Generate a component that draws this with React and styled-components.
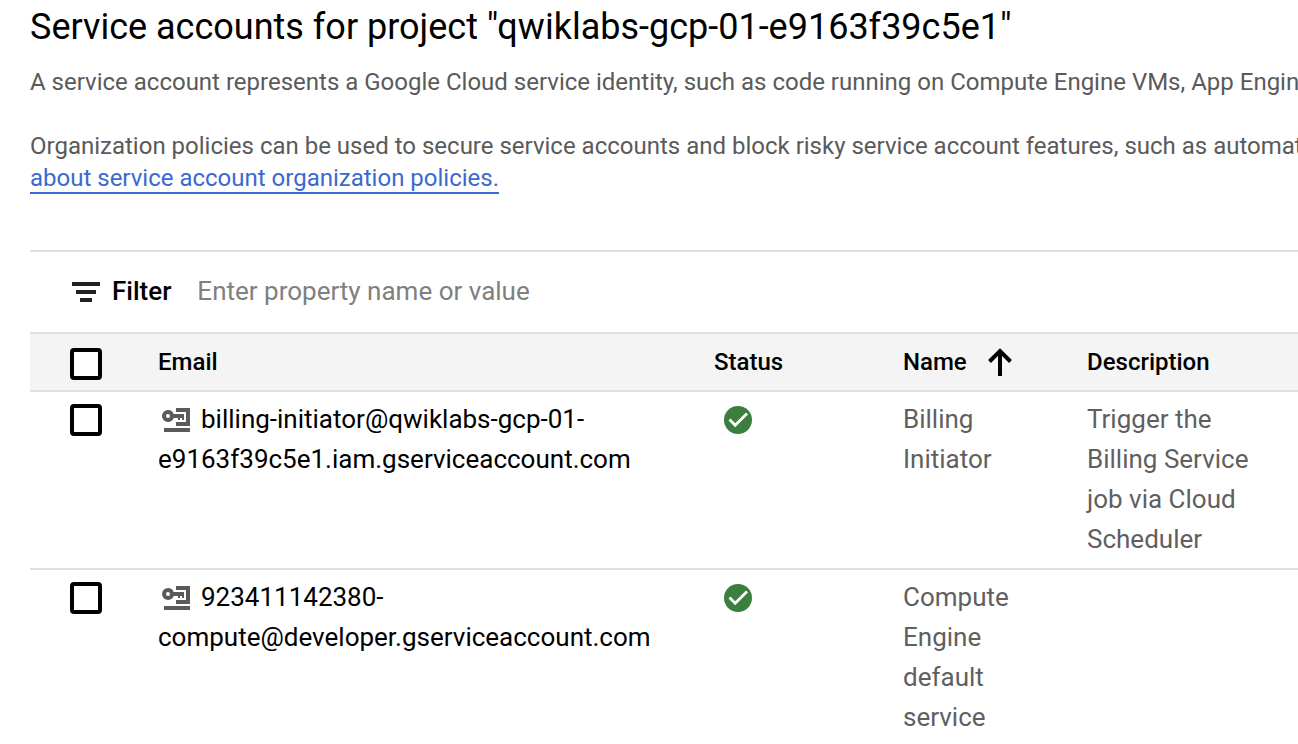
import React from 'react'
import styled, { createGlobalStyle } from 'styled-components'

const GlobalStyle = createGlobalStyle`
  * {
    box-sizing: border-box;
  }
  body {
    margin: 0;
    background: #ffffff;
    font-family: Roboto, "Liberation Sans", sans-serif;
  }
`
const Page = styled.main`
  height: 100vh;
  overflow: hidden;
  padding: 3px 0 0 30px;
`
const Title = styled.h1`
  margin: 0;
  font-size: 36px;
  line-height: 48px;
  font-weight: 400;
  color: #000000;
  white-space: nowrap;
`
const Intro = styled.div`
  padding: 15px 0 56px;
  display: flex;
  flex-direction: column;
  gap: 32px;
`
const Paragraph = styled.p`
  margin: 0;
  font-size: 24px;
  line-height: 32px;
  color: #5a5a5a;
  white-space: nowrap;
`
const PolicyLink = styled.a`
  color: #3b69d0;
  text-decoration: none;
  border-bottom: 2px solid #3b69d0;
`
const FilterBar = styled.div`
  display: flex;
  align-items: center;
  height: 82px;
  padding-left: 42px;
  border-top: 2px solid #e0e0e0;
`
const FilterLabel = styled.label`
  display: flex;
  align-items: center;
  gap: 12px;
  font-size: 26px;
  line-height: 40px;
  font-weight: 500;
  color: #000000;
`
const FilterText = styled.span`
  padding-bottom: 2px;
`
const FilterInput = styled.input`
  flex: 1;
  min-width: 0;
  margin-left: 26px;
  padding: 0 0 2px;
  border: 0;
  outline: 0;
  background: transparent;
  font-family: inherit;
  font-size: 26px;
  line-height: 40px;
  color: #000000;

  &::placeholder {
    color: #808080;
    opacity: 1;
  }
`
const Table = styled.table`
  width: 100%;
  table-layout: fixed;
  border-collapse: separate;
  border-spacing: 0;
`
const Col = styled.col`
  width: ${({ $width }) => $width};
`
const HeadCell = styled.th`
  height: 60px;
  padding: 0 24px 0 0;
  text-align: left;
  vertical-align: middle;
  font-size: 24px;
  line-height: 32px;
  font-weight: 500;
  color: #000000;
  background: #f4f4f4;
  border-top: 2px solid #e0e0e0;
  border-bottom: 2px solid #e0e0e0;
`
const HeadCheckCell = styled(HeadCell)`
  padding: 4px 0 0 40px;
`
const SortButton = styled.button`
  display: flex;
  align-items: center;
  gap: 20px;
  padding: 0;
  border: 0;
  background: transparent;
  font: inherit;
  color: inherit;
`
const Cell = styled.td`
  padding: 7px 24px 9px 0;
  vertical-align: top;
  font-size: 26px;
  line-height: 40px;
  color: ${({ $strong }) => ($strong ? '#000000' : '#5f5f5f')};
  border-bottom: 2px solid #e0e0e0;
`
const CheckCell = styled(Cell)`
  padding: 12px 0 0 40px;
`
const StatusCell = styled(Cell)`
  padding: 14px 0 0 10px;
`
const Checkbox = styled.input`
  appearance: none;
  display: block;
  width: 32px;
  height: 32px;
  margin: 0;
  border: 4px solid #000000;
  border-radius: 4px;
  background: #ffffff;

  &:checked {
    background: #3b69d0;
  }
`
const Svg = styled.svg`
  display: block;
  flex: none;
`
const InlineSvg = styled.svg`
  display: inline-block;
  vertical-align: -4px;
  margin: 0 11px 0 4px;
`

const FilterIcon = () => (
  <Svg width="28" height="20" viewBox="0 0 28 20" fill="#212121" aria-hidden="true">
    <path d="M0 0h28v4H0zM4 8h20v4H4zM8 16h12v4H8z" />
  </Svg>
)

const ArrowUpIcon = () => (
  <Svg width="26" height="28" viewBox="0 0 26 28" fill="none" stroke="#000000" strokeWidth="4" aria-hidden="true">
    <path d="M13 28V4M2.5 13.5L13 3l10.5 10.5" />
  </Svg>
)

const AccountKeyIcon = () => (
  <InlineSvg width="28" height="24" viewBox="0 0 28 24" fill="#5a5a5a" aria-hidden="true">
    <path d="M14 0h14v18H14v-4h10V4H14z" />
    <path fillRule="evenodd" d="M6 2a6 6 0 0 1 5.7 4H22v6h-2v-2h-2v2h-2v-2h-4.300A6 6 0 1 1 6 2zm0 4a2 2 0 1 0 0 4 2 2 0 0 0 0-4z" />
    <path d="M2 20h26v4H2z" />
  </InlineSvg>
)

const EnabledIcon = () => (
  <Svg width="28" height="28" viewBox="0 0 28 28" role="img" aria-label="Enabled">
    <circle cx="14" cy="14" r="14" fill="#3a7f3e" />
    <path d="M5.500 13.500l5.700 5.700L23 7.500" fill="none" stroke="#ffffff" strokeWidth="2.800" />
  </Svg>
)

const accounts = [
  {
    email: 'billing-initiator@qwiklabs-gcp-01-e9163f39c5e1.iam.gserviceaccount.com',
    name: 'Billing Initiator',
    description: 'Trigger the Billing Service job via Cloud Scheduler',
  },
  {
    email: '923411142380-compute@developer.gserviceaccount.com',
    name: 'Compute Engine default service',
    description: '',
  },
]

const App = () => {
  return (
    <Page>
      <GlobalStyle />
      <Title>Service accounts for project "qwiklabs-gcp-01-e9163f39c5e1"</Title>
      <Intro>
        <Paragraph>
          A service account represents a Google Cloud service identity, such as code running on Compute Engine VMs, App Engine
        </Paragraph>
        <Paragraph>
          Organization policies can be used to secure service accounts and block risky service account features, such as automatic
          <br />
          <PolicyLink href="#policies">about service account organization policies.</PolicyLink>
        </Paragraph>
      </Intro>
      <FilterBar>
        <FilterLabel htmlFor="filter">
          <FilterIcon />
          <FilterText>Filter</FilterText>
        </FilterLabel>
        <FilterInput id="filter" type="text" placeholder="Enter property name or value" />
      </FilterBar>
      <Table>
        <colgroup>
          <Col $width="128px" />
          <Col $width="556px" />
          <Col $width="189px" />
          <Col $width="184px" />
          <Col $width="auto" />
        </colgroup>
        <thead>
          <tr>
            <HeadCheckCell scope="col">
              <Checkbox type="checkbox" aria-label="Select all service accounts" />
            </HeadCheckCell>
            <HeadCell scope="col">Email</HeadCell>
            <HeadCell scope="col">Status</HeadCell>
            <HeadCell scope="col" aria-sort="ascending">
              <SortButton type="button">
                Name
                <ArrowUpIcon />
              </SortButton>
            </HeadCell>
            <HeadCell scope="col">Description</HeadCell>
          </tr>
        </thead>
        <tbody>
          {accounts.map((account) => (
            <tr key={account.email}>
              <CheckCell>
                <Checkbox type="checkbox" aria-label={`Select ${account.email}`} />
              </CheckCell>
              <Cell $strong>
                <AccountKeyIcon />
                {account.email}
              </Cell>
              <StatusCell>
                <EnabledIcon />
              </StatusCell>
              <Cell>{account.name}</Cell>
              <Cell>{account.description}</Cell>
            </tr>
          ))}
        </tbody>
      </Table>
    </Page>
  )
}

export default App
